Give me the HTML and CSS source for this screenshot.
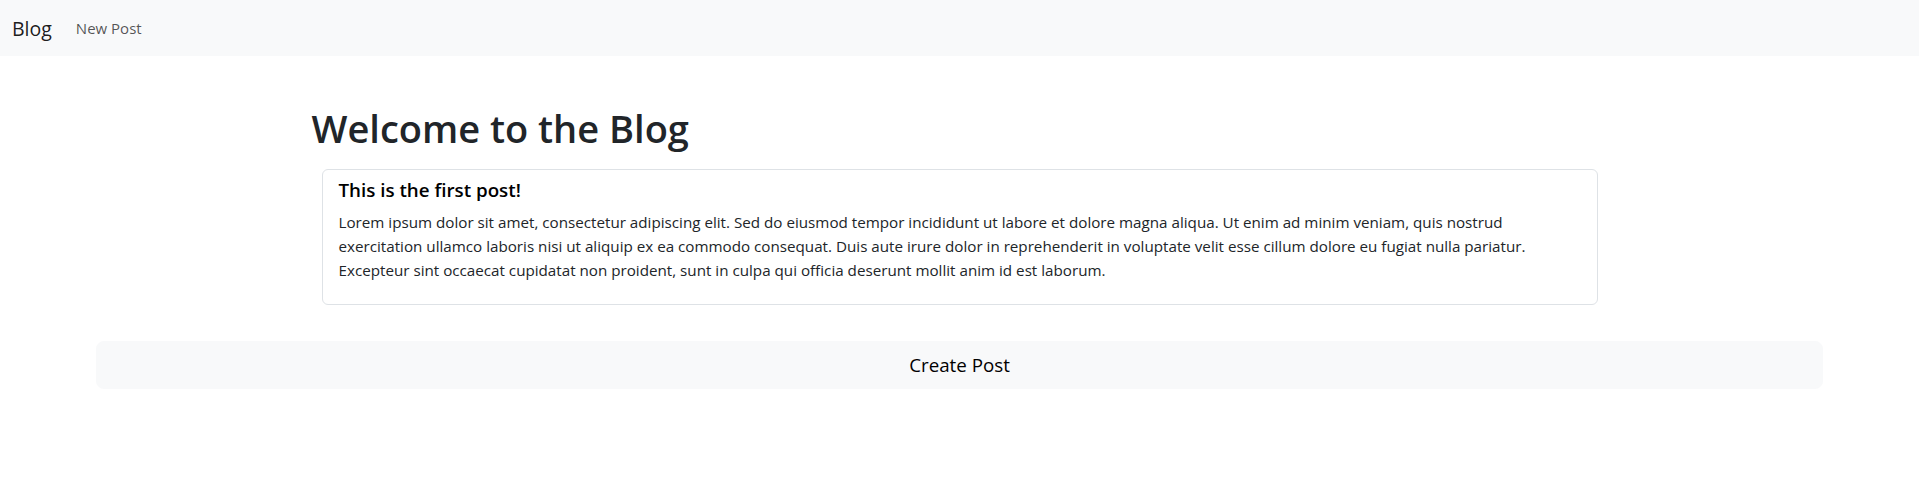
FILE: index.html
```html
<!DOCTYPE html>
<html lang="en">
<head>
<meta charset="utf-8">
<title>Blog</title>
<link rel="stylesheet" href="styles.css">
</head>
<body>
<nav class="navbar">
  <a class="brand" href="#">Blog</a>
  <a class="nav-link" href="#">New Post</a>
</nav>
<main class="container">
  <h1 class="page-title">Welcome to the Blog</h1>
  <div class="card">
    <h5 class="card-title">This is the first post!</h5>
    <p class="card-text">Lorem ipsum dolor sit amet, consectetur adipiscing elit. Sed do eiusmod tempor incididunt ut labore et dolore magna aliqua. Ut enim ad minim veniam, quis nostrud exercitation ullamco laboris nisi ut aliquip ex ea commodo consequat. Duis aute irure dolor in reprehenderit in voluptate velit esse cillum dolore eu fugiat nulla pariatur. Excepteur sint occaecat cupidatat non proident, sunt in culpa qui officia deserunt mollit anim id est laborum.</p>
  </div>
</main>
<div class="actions">
  <button class="btn-create" type="button">Create Post</button>
</div>
</body>
</html>
```

FILE: styles.css
```css
*, *::before, *::after { box-sizing: border-box; }

body {
  margin: 0;
  font-family: "Open Sans", "Noto Sans", sans-serif;
  color: #212529;
  background: #fff;
}

.navbar {
  display: flex;
  align-items: center;
  height: 56px;
  padding: 0 12px;
  background: #f8f9fa;
}

.brand {
  font-size: 19.5px;
  line-height: 30px;
  padding-top: 2px;
  margin-right: 16px;
  color: rgba(0, 0, 0, 0.9);
  text-decoration: none;
}

.nav-link {
  font-size: 15px;
  line-height: 24px;
  padding: 8px;
  color: rgba(0, 0, 0, 0.68);
  text-decoration: none;
}

.container {
  max-width: 1320px;
  margin: 0 auto;
  padding: 0 12px;
}

.page-title {
  margin: 49px 0 0;
  font-size: 38px;
  line-height: 46px;
  font-weight: 600;
  color: #212529;
}

.card {
  margin: 18px 10px 0;
  padding: 8px 16px;
  border: 1px solid #dee2e6;
  border-radius: 6px;
}

.card-title {
  margin: 0 0 8px;
  font-size: 18.75px;
  line-height: 24px;
  font-weight: 600;
  color: #000;
}

.card-text {
  margin: 0 0 14px;
  font-size: 15.2px;
  line-height: 24px;
}

.actions {
  width: 90%;
  margin: 36px auto 0;
}

.btn-create {
  display: block;
  width: 100%;
  height: 48px;
  padding: 8px 16px;
  font-family: inherit;
  font-size: 18.75px;
  line-height: 30px;
  color: #000;
  background: #f8f9fa;
  border: 1px solid #f8f9fa;
  border-radius: 8px;
}
```
